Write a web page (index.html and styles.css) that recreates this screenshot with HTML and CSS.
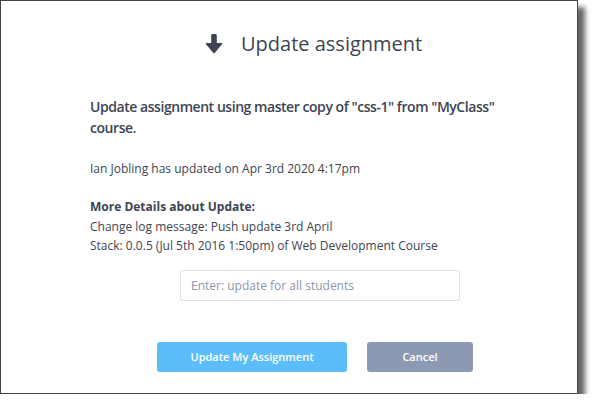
FILE: index.html
```html
<!DOCTYPE html>
<html>
<head>
<meta charset="utf-8">
<link rel="stylesheet" href="styles.css">
</head>
<body>
<div class="dialog">
  <div class="header">
    <svg class="icon" viewBox="0 0 18 20" width="18" height="20"><path fill="#3d4452" stroke="#3d4452" stroke-width="1.6" stroke-linejoin="round" d="M7 1.2 Q7 0.8 7.6 0.8 H10.4 Q11 0.8 11 1.2 V9.8 H16.4 L9 18.6 L1.6 9.8 H7 Z"/></svg>
    <h1 class="title">Update assignment</h1>
  </div>
  <div class="content">
    <p class="lead">Update assignment using master copy of "css-1" from "MyClass" course.</p>
    <p class="meta">Ian Jobling has updated on Apr 3rd 2020 4:17pm</p>
    <div class="details">
      <div class="details-title">More Details about Update:</div>
      <div>Change log message: Push update 3rd April</div>
      <div>Stack: 0.0.5 (Jul 5th 2016 1:50pm) of Web Development Course</div>
    </div>
    <input class="field" type="text" placeholder="Enter: update for all students">
  </div>
  <div class="actions">
    <button class="btn btn-primary">Update My Assignment</button>
    <button class="btn btn-cancel">Cancel</button>
  </div>
</div>
</body>
</html>
```
FILE: styles.css
```css
html, body {
  margin: 0;
  padding: 0;
  background: #ffffff;
}
body {
  font-family: "Open Sans", "Noto Sans", sans-serif;
  color: #3d4452;
}
.dialog {
  box-sizing: border-box;
  width: 578px;
  height: 394px;
  border: 1px solid #444;
  background: #fff;
  box-shadow: 7px 7px 5px rgba(0, 0, 0, 0.6);
  display: flex;
  flex-direction: column;
}
.header {
  display: flex;
  align-items: center;
  gap: 18px;
  padding: 31px 0 0 204px;
  height: 24px;
}
.icon {
  display: block;
}
.title {
  margin: 0;
  font-size: 20px;
  font-weight: 400;
  line-height: 24px;
  color: #3d4452;
}
.content {
  padding: 40px 60px 0 89px;
  display: flex;
  flex-direction: column;
}
.lead {
  margin: 0;
  font-size: 14px;
  font-weight: 600;
  letter-spacing: -0.45px;
  line-height: 21px;
  color: #3d4452;
}
.meta {
  margin: 21px 0 0 0;
  font-size: 12px;
  line-height: 19px;
  color: #3d4452;
}
.details {
  margin-top: 19px;
  font-size: 12px;
  line-height: 19.5px;
  color: #3d4452;
}
.details-title {
  font-weight: 700;
}
.field {
  box-sizing: border-box;
  margin: 14px 0 0 90px;
  width: 280px;
  height: 31px;
  border: 1px solid #dde0ea;
  border-radius: 2px;
  padding: 0 10px;
  font-family: "Open Sans", "Noto Sans", sans-serif;
  font-size: 12px;
  color: #3d4452;
  outline: none;
}
.field::placeholder {
  color: #8e96aa;
}
.actions {
  display: flex;
  gap: 20px;
  padding: 41px 0 0 156px;
}
.btn {
  height: 30px;
  border: none;
  border-radius: 3px;
  font-family: "Open Sans", "Noto Sans", sans-serif;
  font-size: 11px;
  font-weight: 600;
  color: #fff;
  padding: 0;
}
.btn-primary {
  width: 190px;
  background: #5bbefa;
}
.btn-cancel {
  width: 106px;
  background: #8d99b2;
}
```
